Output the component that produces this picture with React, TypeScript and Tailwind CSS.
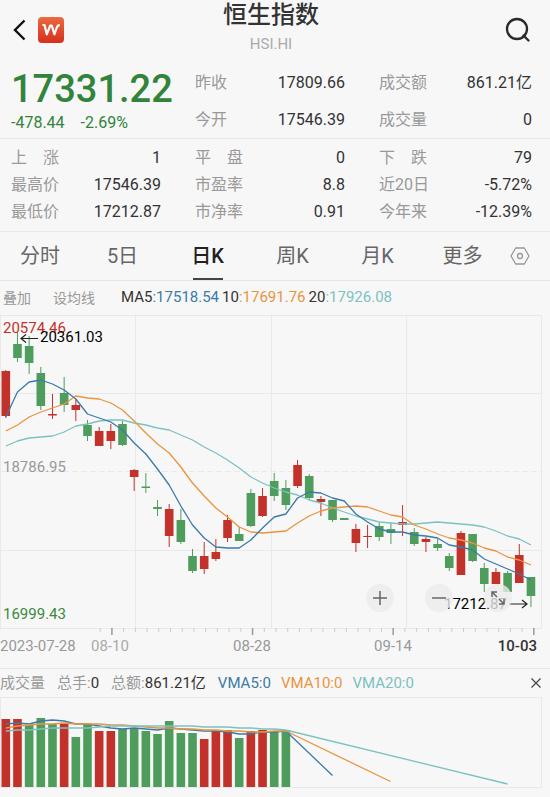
import type { ReactNode } from "react";

type Candle = {
  up: boolean;
  high: number;
  top: number;
  bottom: number;
  low: number;
};

const RED = "#c2312a";
const GREEN = "#4f9d5c";
const BLUE = "#3b7aa8";
const ORANGE = "#ea9440";
const TEAL = "#7bc2c1";

const STEP = 11.67;
const FIRST_X = 5.8;
const xAt = (index: number) => FIRST_X + index * STEP;

const c = (up: number, high: number, top: number, bottom: number, low: number): Candle => ({
  up: up === 1,
  high,
  top,
  bottom,
  low,
});

// Offsets from the top edge of the price chart: high, body top, body bottom, low.
const candles: Candle[] = [
  c(1, 55, 56, 101, 103),
  c(0, 17, 29, 43, 47),
  c(0, 21, 31, 48, 59),
  c(0, 52, 58, 91, 95),
  c(1, 79, 99, 100.5, 104),
  c(0, 62, 78, 90, 97),
  c(1, 84, 90, 95, 106),
  c(0, 105, 110, 121, 126),
  c(1, 112, 116, 131, 131),
  c(1, 109, 116, 126, 134),
  c(0, 106, 109, 130, 131),
  c(1, 154, 155, 162, 176),
  c(0, 158, 171.5, 173, 178),
  c(0, 185, 192, 194, 201),
  c(1, 189, 194, 221, 232),
  c(0, 194, 205, 227, 229),
  c(0, 234, 241, 256, 258),
  c(1, 227, 241, 254, 259),
  c(1, 224, 237, 244, 246),
  c(1, 200, 205, 223, 227),
  c(0, 212, 219, 226, 226),
  c(0, 174, 178, 211, 212),
  c(1, 173, 181, 201, 202),
  c(0, 158, 166, 181, 186),
  c(0, 165, 173, 190, 195),
  c(1, 145, 150, 171, 173),
  c(0, 159, 161, 183, 185),
  c(1, 181, 184, 187, 201),
  c(0, 185, 185, 205, 207),
  c(0, 203, 203, 205, 205),
  c(1, 209, 214, 228, 237),
  c(1, 210, 221, 222, 233),
  c(0, 207, 211, 222, 226),
  c(0, 208, 214, 218, 229),
  c(1, 190, 207, 210, 221),
  c(0, 213, 217, 229, 231),
  c(1, 222, 224, 227, 237),
  c(0, 224, 229, 233, 236),
  c(0, 238, 241, 253, 256),
  c(1, 216, 218, 260, 260),
  c(0, 219, 219, 246, 247),
  c(0, 248, 253, 269, 277),
  c(1, 253, 257, 269, 269),
  c(0, 256, 258, 277, 277),
  c(1, 229, 240, 268, 268),
  c(0, 262, 262, 281, 292),
];

const ma5 = [
  102, 77, 67, 65, 69, 75, 84, 99, 103, 107, 115, 128, 139, 154, 170, 191, 210, 223, 232, 233, 233,
  225, 213, 202, 199, 183, 177, 178, 183, 186, 199, 207, 214, 217, 217, 220, 221, 223, 230, 232, 235,
  244, 249, 254, 259, 265,
];
const ma10 = [
  116, 110, 102, 97, 93, 89, 81, 83, 84, 88, 95, 106, 118, 129, 138, 152, 168, 181, 193, 202, 212,
  217, 218, 217, 216, 208, 201, 196, 193, 192, 191, 192, 196, 200, 202, 210, 214, 219, 223, 225, 228,
  233, 236, 242, 245, 250,
];
const ma20 = [
  131, 126, 123, 122, 121, 117, 111, 109, 106, 105, 105, 108, 110, 113, 115, 120, 125, 132, 138, 145,
  153, 162, 168, 173, 177, 180, 185, 188, 193, 197, 201, 204, 207, 208, 209, 209, 208, 207, 208, 209,
  210, 212, 216, 221, 224, 230,
];

// Bar tops from the top edge of the volume chart.
const volumes: [number, number][] = [
  [1, 22], [1, 22], [0, 28], [0, 21], [0, 27], [1, 27], [0, 40], [0, 27], [1, 34], [1, 34],
  [0, 32], [0, 31], [0, 34], [0, 37], [0, 24], [0, 36], [0, 36], [1, 42], [1, 34], [1, 33],
  [0, 41], [1, 34], [1, 33], [0, 34], [0, 34],
];
const vma5 = [27, 26, 27, 24, 23, 24, 27, 27, 29, 31, 32, 31, 32, 33, 31, 32, 33, 34, 34, 35, 37, 37, 35, 35, 34];
const vma10 = [31, 29, 28, 27, 27, 26, 27, 27, 27, 28, 28, 29, 30, 31, 31, 32, 32, 33, 33, 34, 34, 35, 35, 34, 34];
const vma20 = [34, 33, 33, 32, 31, 31, 31, 31, 30, 29, 29, 29, 29, 29, 29, 29, 29, 30, 30, 30, 31, 31, 32, 32, 33];

const toPoints = (ys: number[]) => ys.map((y, i) => `${xAt(i)},${y}`).join(" ");

function Line({ points, color }: { points: string; color: string }) {
  return <polyline points={points} fill="none" stroke={color} strokeWidth="1.3" strokeLinejoin="round" />;
}

function Stat({ label, value }: { label: string; value: string }) {
  return (
    <div className="flex items-center justify-between whitespace-nowrap">
      <dt className="text-[#999]">{label}</dt>
      <dd className="text-[#333]">{value}</dd>
    </div>
  );
}

const tabs = ["分时", "5日", "日K", "周K", "月K", "更多"];

function RoundButton({ label, children }: { label: string; children: ReactNode }) {
  return (
    <button
      type="button"
      aria-label={label}
      className="flex size-7 items-center justify-center rounded-full bg-[#ebebeb]/80"
    >
      <svg viewBox="0 0 16 16" className="size-4" fill="none" stroke="#666" strokeWidth="1.5">
        {children}
      </svg>
    </button>
  );
}

function PriceChart() {
  return (
    <div className="relative">
      <svg viewBox="0 0 550 353" className="block w-full" role="img" aria-label="日K">
        <g stroke="#e9e9e9" fill="none">
          <rect x="0.5" y="0.5" width="541" height="313" />
          <path d="M135.5 0V313M271.5 0V313M406.5 0V313M0 78.5H541M0 235.5H541" />
          <path d="M0 156.5H541" strokeDasharray="6 3" />
        </g>
        {Array.from({ length: 38 }, (_, i) => {
          const major = i % 12 === 1;
          const x = 100.2 + i * 11.72;
          return (
            <path
              key={i}
              d={`M${x} 313v${major ? 7 : 4}`}
              stroke={major ? "#999" : "#ccc"}
              strokeWidth={major ? 1.5 : 1}
            />
          );
        })}
        <text x="3" y="157" className="fill-[#999] text-[15px]">18786.95</text>
        <text x="3" y="304" className="fill-[#3a8a3e] text-[15px]">16999.43</text>
        {candles.map((k, i) => (
          <g key={i} fill={k.up ? RED : GREEN}>
            <rect x={xAt(i) - 0.5} y={k.high} width="1" height={k.low - k.high} />
            <rect x={xAt(i) - 4.3} y={k.top} width="8.6" height={k.bottom - k.top} />
          </g>
        ))}
        <Line points={toPoints(ma20)} color={TEAL} />
        <Line points={toPoints(ma10)} color={ORANGE} />
        <Line points={toPoints(ma5)} color={BLUE} />
        <text x="3" y="18" className="fill-[#c2312a] text-[15px]">20574.46</text>
        <text x="40" y="27" className="fill-black text-[15px]">20361.03</text>
        <path d="M38 23.500H21m5-4-5 4 5 4" fill="none" stroke="#222" strokeWidth="1.2" />
        <text x="444" y="294" className="fill-black text-[15px]">17212.87</text>
        <path d="M509 289H527m-5-4 5 4-5 4" fill="none" stroke="#222" strokeWidth="1.2" />
        <g className="text-[15px]">
          <text x="0" y="336" className="fill-[#999]">2023-07-28</text>
          <text x="91" y="336" className="fill-[#aaa]">08-10</text>
          <text x="252" y="336" textAnchor="middle" className="fill-[#999]">08-28</text>
          <text x="393" y="336" textAnchor="middle" className="fill-[#999]">09-14</text>
          <text x="537" y="336" textAnchor="end" className="fill-[#333] font-medium">10-03</text>
        </g>
      </svg>
      <div className="absolute right-[7%] bottom-[16%] flex gap-[31px]">
        <RoundButton label="放大">
          <path d="M8 1v14M1 8h14" />
        </RoundButton>
        <RoundButton label="缩小">
          <path d="M1 8h14" />
        </RoundButton>
        <RoundButton label="全屏">
          <path d="M7 7 2 2m0 5V2h5M9 9l5 5m0-5v5H9" />
        </RoundButton>
      </div>
    </div>
  );
}

function VolumeChart() {
  const tail = (ys: number[], x: number, y: number) => `${toPoints(ys)} ${x},${y}`;
  return (
    <svg viewBox="0 0 550 92" className="block w-full" role="img" aria-label="成交量">
      <rect x="0.5" y="0.5" width="541" height="90" fill="none" stroke="#e9e9e9" />
      {volumes.map(([up, top], i) => (
        <rect key={i} x={xAt(i) - 4.3} y={top} width="8.6" height={90 - top} fill={up ? RED : GREEN} />
      ))}
      <Line points={tail(vma5, 332.5, 78.5)} color={BLUE} />
      <Line points={tail(vma10, 390.500, 84.5)} color={ORANGE} />
      <Line points={tail(vma20, 507.5, 87)} color={TEAL} />
    </svg>
  );
}

export default function App() {
  return (
    <main className="min-h-screen overflow-hidden bg-[#f7f7f7] font-[Roboto,'Noto_Sans_CJK_SC',sans-serif] text-[#333]">
      <header className="grid h-14 grid-cols-[1fr_auto_1fr] pr-2">
        <div className="flex items-center gap-3 pt-0.5 pl-3">
          <button type="button" aria-label="返回">
            <svg viewBox="0 0 14 22" className="h-[22px] w-3.5" fill="none" stroke="#111" strokeWidth="2.4">
              <path d="M12.500 1.500 3 11l9.500 9.500" />
            </svg>
          </button>
          <svg viewBox="0 0 26 26" className="size-[26px]" aria-hidden="true">
            <defs>
              <linearGradient id="badge" x1="0" y1="0" x2="0" y2="1">
                <stop offset="0" stopColor="#ea6a3f" />
                <stop offset="1" stopColor="#d6301f" />
              </linearGradient>
            </defs>
            <rect width="26" height="26" rx="4" fill="url(#badge)" />
            <path
              d="M4.500 8H6.500L8.800 17.300 12.200 8.500H13.800L16.400 17.300 18.800 10.500C19.400 8.800 20.200 8.200 21.800 8.200"
              fill="none"
              stroke="#fff"
              strokeWidth="2.2"
              strokeLinejoin="round"
            />
          </svg>
        </div>
        <div className="text-center">
          <h1 className="text-2xl leading-[30px] font-medium">恒生指数</h1>
          <p className="text-[15px] leading-7 text-[#aaa]">HSI.HI</p>
        </div>
        <div className="flex items-center justify-end pt-0.5 pr-3">
          <button type="button" aria-label="搜索">
            <svg viewBox="0 0 26 26" className="size-[26px]" fill="none" stroke="#2a2a2a" strokeWidth="2.3">
              <circle cx="13" cy="12" r="10" />
              <path d="m19.500 18.500 5 5" strokeLinecap="round" />
            </svg>
          </button>
        </div>
      </header>

      <section className="grid grid-cols-[minmax(0,150fr)_minmax(0,150fr)_minmax(0,153fr)] gap-x-[34px] border-b border-[#e9e9e9] pt-2 pr-[18px] pl-[11px]">
        <div className="whitespace-nowrap text-[#31843a]">
          <p className="text-[38px] leading-[50px] font-medium">17331.22</p>
          <p className="flex gap-4 text-base leading-[18px]">
            <span>-478.44</span>
            <span>-2.69%</span>
          </p>
        </div>
        <dl className="text-base leading-[37px]">
          <Stat label="昨收" value="17809.66" />
          <Stat label="今开" value="17546.39" />
        </dl>
        <dl className="text-base leading-[37px]">
          <Stat label="成交额" value="861.21亿" />
          <Stat label="成交量" value="0" />
        </dl>
      </section>

      <dl className="grid grid-cols-[minmax(0,150fr)_minmax(0,150fr)_minmax(0,153fr)] gap-x-[34px] border-b border-[#e9e9e9] pt-[5px] pr-[18px] pb-1.5 pl-[11px] text-base leading-[27px]">
        <Stat label="上　涨" value="1" />
        <Stat label="平　盘" value="0" />
        <Stat label="下　跌" value="79" />
        <Stat label="最高价" value="17546.39" />
        <Stat label="市盈率" value="8.8" />
        <Stat label="近20日" value="-5.72%" />
        <Stat label="最低价" value="17212.87" />
        <Stat label="市净率" value="0.91" />
        <Stat label="今年来" value="-12.39%" />
      </dl>

      <nav className="grid h-[49px] grid-cols-[80fr_repeat(5,85fr)_29fr] border-b border-[#e4e4e4] pr-4 text-xl">
        {tabs.map((tab) => {
          const active = tab === "日K";
          return (
            <button
              key={tab}
              type="button"
              aria-current={active ? "page" : undefined}
              className={
                active
                  ? "flex flex-col items-center justify-between font-medium text-[#222]"
                  : "flex flex-col items-center justify-between text-[#666]"
              }
            >
              <span className="leading-[48px]">{tab}</span>
              {active && <span className="-mt-1 h-0.5 w-[30px] shrink-0 bg-[#444]" />}
            </button>
          );
        })}
        <button type="button" aria-label="设置" className="flex items-center justify-center">
          <svg viewBox="0 0 20 20" className="size-5" fill="none" stroke="#999" strokeWidth="1.3">
            <path d="M5.700 2h8.600L19 10l-4.700 8H5.700L1 10z" strokeLinejoin="round" />
            <circle cx="10" cy="10" r="2.500" />
          </svg>
        </button>
      </nav>

      <div className="flex h-[34px] items-center pl-[3px] text-sm whitespace-nowrap">
        <button type="button" className="text-[#999]">叠加</button>
        <button type="button" className="ml-[22px] text-[#999]">设均线</button>
        <p className="ml-[26px] flex gap-[3px] text-[15px]">
          <span>MA5<span className="text-[#3b7aa8]">:17518.54</span></span>
          <span>10<span className="text-[#ea9440]">:17691.76</span></span>
          <span>20<span className="text-[#7bc2c1]">:17926.08</span></span>
        </p>
      </div>

      <PriceChart />

      <div className="flex h-[29px] items-center border-t border-[#e9e9e9] pr-2 text-[15px] whitespace-nowrap">
        <span className="text-[#999]">成交量</span>
        <span className="ml-3 text-[#999]">总手:<span className="text-[#333]">0</span></span>
        <span className="ml-3 text-[#999]">总额:<span className="text-[#333]">861.21亿</span></span>
        <span className="ml-3 text-[#3b7aa8]">VMA5:0</span>
        <span className="ml-2.5 text-[#ea9440]">VMA10:0</span>
        <span className="ml-2.5 text-[#7bc2c1]">VMA20:0</span>
        <button type="button" aria-label="关闭" className="ml-auto">
          <svg viewBox="0 0 12 12" className="size-3" fill="none" stroke="#444" strokeWidth="1.2">
            <path d="m1.500 1.500 9 9m0-9-9 9" />
          </svg>
        </button>
      </div>

      <VolumeChart />
    </main>
  );
}
